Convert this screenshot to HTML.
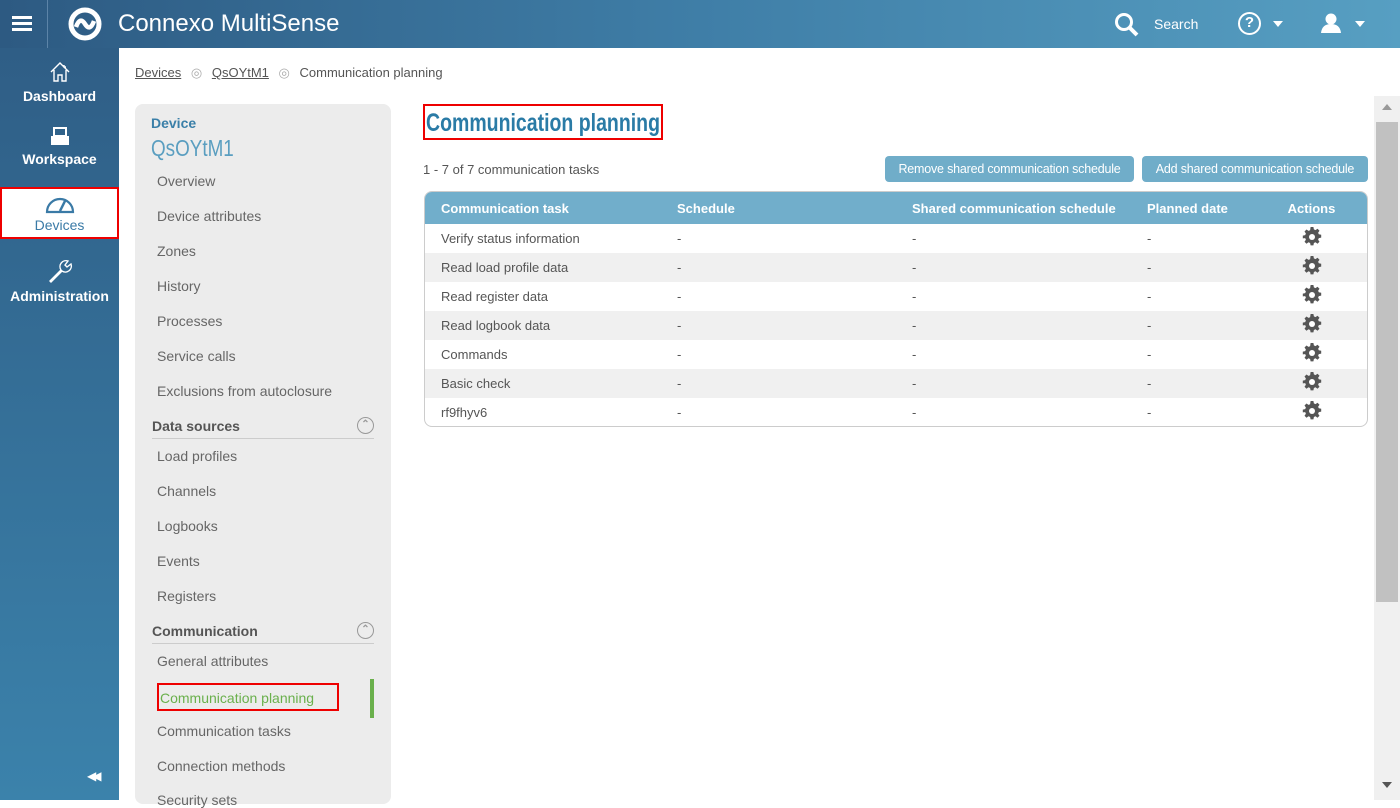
<!DOCTYPE html>
<html><head><meta charset="utf-8"><style>
*{box-sizing:border-box;margin:0;padding:0}
body{width:1400px;height:800px;overflow:hidden;font-family:"Liberation Sans",sans-serif;background:#fff;position:relative;color:#555}
#hdr{position:absolute;left:0;top:0;width:1400px;height:48px;background:linear-gradient(90deg,#2d5a82,#3f7ea7 50%,#579fc2)}
#side{position:absolute;left:0;top:48px;width:119px;height:752px;background:linear-gradient(180deg,#2f5e86,#3b82ab)}
.nav{position:absolute;left:0;width:119px;text-align:center;color:#fff;font-size:14px;font-weight:bold}
.abs{position:absolute}
.sub{position:absolute;left:157px;font-size:14px;color:#666}
.sec{position:absolute;left:152px;width:222px;font-size:14px;font-weight:bold;color:#555;border-bottom:1px solid #ccc;height:21px}
.sec span{position:absolute;right:0;top:-1px;width:17px;height:17px;border:1.5px solid #999;border-radius:50%;font-size:10px;color:#999;text-align:center;line-height:14px}
table{border-collapse:collapse;width:942px;font-size:13px}
th{background:#71aecb;color:#fff;text-align:left;height:32px;font-weight:bold;padding-left:16px}
td{height:29px;padding-left:16px;color:#555}
tr:nth-child(odd) td{background:#f0f0f0}
.btn{position:absolute;top:156px;height:26px;background:#70adc9;color:#fff;font-size:12.5px;border-radius:4px;line-height:26px;text-align:center;letter-spacing:-0.2px}
.gear{padding-left:0;text-align:center}
</style></head><body>
<svg width="0" height="0" style="position:absolute"><defs><g id="g"><path d="M8.6 0h2.8l.5 2.4 1.6.7 2-1.4 2 2-1.4 2 .7 1.6 2.4.5v2.8l-2.4.5-.7 1.6 1.4 2-2 2-2-1.4-1.6.7-.5 2.4H8.6l-.5-2.4-1.6-.7-2 1.4-2-2 1.4-2-.7-1.6L.8 11.4V8.6l2.4-.5.7-1.6-1.4-2 2-2 2 1.4 1.6-.7z" fill="#555"/><circle cx="10" cy="10" r="3" fill="#fff"/></g></defs></svg>
<div id="hdr">
 <div class="abs" style="left:12px;top:16px;width:20px;height:3px;background:#fff;box-shadow:0 6px 0 #fff,0 12px 0 #fff"></div>
 <div class="abs" style="left:47px;top:0;width:1px;height:48px;background:#5c84a8"></div>
 <svg class="abs" style="left:62px;top:6px" width="46" height="36" viewBox="0 0 46 36"><circle cx="23" cy="18" r="14" fill="none" stroke="#fff" stroke-width="5"/><path d="M14 21 Q18 10 23 18 Q28 26 32 15" fill="none" stroke="#fff" stroke-width="4.5"/></svg>
 <div class="abs" style="left:118px;top:10px;color:#fff;font-size:24px">Connexo MultiSense</div>
 <svg class="abs" style="left:1114px;top:12px" width="26" height="26"><circle cx="10" cy="10" r="7.5" fill="none" stroke="#fff" stroke-width="3"/><path d="M15 15 L23 23" stroke="#fff" stroke-width="4"/></svg>
 <div class="abs" style="left:1154px;top:16px;color:#fff;font-size:14px">Search</div>
 <div class="abs" style="left:1238px;top:12px;width:23px;height:23px;border:2.5px solid #fff;border-radius:50%;color:#fff;font-weight:bold;font-size:15px;text-align:center;line-height:18px">?</div>
 <div class="abs" style="left:1273px;top:21px;border:5px solid transparent;border-top:6px solid #fff"></div>
 <svg class="abs" style="left:1320px;top:12px" width="22" height="22"><circle cx="11" cy="7" r="5.5" fill="#fff"/><path d="M1 21 Q2 12 11 12 Q20 12 21 21Z" fill="#fff"/></svg>
 <div class="abs" style="left:1355px;top:21px;border:5px solid transparent;border-top:6px solid #fff"></div>
</div>
<div id="side">
 <div class="nav" style="top:12px"><svg width="24" height="24" viewBox="0 0 24 24"><path d="M3 12 L12 3 L21 12 M6 10 V21 H10 V15 H14 V21 H18 V10 M16 5 V7 H18" fill="none" stroke="#fff" stroke-width="1.4"/></svg><div style="margin-top:1px">Dashboard</div></div>
 <div class="nav" style="top:78px"><svg width="20" height="22" viewBox="0 0 20 22"><rect x="4" y="2" width="12" height="8" fill="none" stroke="#fff" stroke-width="2"/><rect x="1" y="10" width="18" height="9" fill="#fff"/></svg><div>Workspace</div></div>
 <div class="abs" style="left:0;top:139px;width:119px;height:52px;background:#fff;border:2px solid #e00;text-align:center;color:#3a7aa6;font-size:14px;padding-top:5px"><svg width="30" height="20" viewBox="0 0 30 20"><path d="M2 18 A13 13 0 0 1 28 18 Z" fill="none" stroke="#3a7aa6" stroke-width="2.2"/><path d="M15 17 L20 7" stroke="#3a7aa6" stroke-width="2.5"/></svg><div style="margin-top:0px">Devices</div></div>
 <div class="nav" style="top:209px"><svg width="28" height="28" viewBox="0 0 28 28"><path d="M4 24 L15 13 A6 6 0 0 1 22 4 L19 8 L21 10 L25 7 A6 6 0 0 1 16 14 L5 25Z" fill="none" stroke="#fff" stroke-width="1.4"/></svg><div>Administration</div></div>
 <div class="abs" style="left:87px;top:721px;color:#fff;font-size:12px;letter-spacing:-4px">◀◀</div>
</div>
<div class="abs" style="left:135px;top:65px;font-size:13px;color:#555"><u>Devices</u> <span style="color:#aaa;margin:0 6px">◎</span> <u>QsOYtM1</u> <span style="color:#aaa;margin:0 6px">◎</span> Communication planning</div>
<div class="abs" style="left:135px;top:104px;width:256px;height:700px;background:#ececec;border-radius:8px"></div>
<div class="abs" style="left:151px;top:115px;color:#3a7fa8;font-weight:bold;font-size:14px">Device</div>
<div class="abs" style="left:151px;top:135px;color:#5a9ec0;font-size:23px;transform:scaleX(.82);transform-origin:left">QsOYtM1</div>
<div class="sub" style="top:173px">Overview</div>
<div class="sub" style="top:208px">Device attributes</div>
<div class="sub" style="top:243px">Zones</div>
<div class="sub" style="top:278px">History</div>
<div class="sub" style="top:313px">Processes</div>
<div class="sub" style="top:348px">Service calls</div>
<div class="sub" style="top:383px">Exclusions from autoclosure</div>
<div class="sec" style="top:418px">Data sources<span>⌃</span></div>
<div class="sub" style="top:448px">Load profiles</div>
<div class="sub" style="top:483px">Channels</div>
<div class="sub" style="top:518px">Logbooks</div>
<div class="sub" style="top:553px">Events</div>
<div class="sub" style="top:588px">Registers</div>
<div class="sec" style="top:623px">Communication<span>⌃</span></div>
<div class="sub" style="top:653px">General attributes</div>
<div class="abs" style="left:157px;top:683px;width:182px;height:28px;border:2px solid #e00;color:#6ab04c;font-size:14px;padding:5px 0 0 1px">Communication planning</div>
<div class="abs" style="left:370px;top:679px;width:4px;height:39px;background:#6ab04c"></div>
<div class="sub" style="top:723px">Communication tasks</div>
<div class="sub" style="top:758px">Connection methods</div>
<div class="sub" style="top:792px">Security sets</div>
<div class="abs" style="left:423px;top:104px;width:240px;height:36px;border:2px solid #e00;color:#2a7ba6;font-size:25px;font-weight:bold;padding:3px 0 0 1px;white-space:nowrap"><span style="display:inline-block;transform:scaleX(.78);transform-origin:left">Communication planning</span></div>
<div class="abs" style="left:423px;top:162px;font-size:13px;color:#555">1 - 7 of 7 communication tasks</div>
<div class="btn" style="left:885px;width:249px">Remove shared communication schedule</div>
<div class="btn" style="left:1142px;width:226px">Add shared communication schedule</div>
<div class="abs" style="left:424px;top:191px;width:944px;height:236px;border:1px solid #ccc;border-radius:8px;overflow:hidden">
<table>
<tr><th style="width:236px">Communication task</th><th style="width:235px">Schedule</th><th style="width:235px">Shared communication schedule</th><th style="width:125px">Planned date</th><th style="padding-left:0;text-align:center">Actions</th></tr>
<tr><td>Verify status information</td><td>-</td><td>-</td><td>-</td><td class="gear"><svg width="20" height="20"><use href="#g"/></svg></td></tr>
<tr><td>Read load profile data</td><td>-</td><td>-</td><td>-</td><td class="gear"><svg width="20" height="20"><use href="#g"/></svg></td></tr>
<tr><td>Read register data</td><td>-</td><td>-</td><td>-</td><td class="gear"><svg width="20" height="20"><use href="#g"/></svg></td></tr>
<tr><td>Read logbook data</td><td>-</td><td>-</td><td>-</td><td class="gear"><svg width="20" height="20"><use href="#g"/></svg></td></tr>
<tr><td>Commands</td><td>-</td><td>-</td><td>-</td><td class="gear"><svg width="20" height="20"><use href="#g"/></svg></td></tr>
<tr><td>Basic check</td><td>-</td><td>-</td><td>-</td><td class="gear"><svg width="20" height="20"><use href="#g"/></svg></td></tr>
<tr><td>rf9fhyv6</td><td>-</td><td>-</td><td>-</td><td class="gear"><svg width="20" height="20"><use href="#g"/></svg></td></tr>
</table></div>
<div class="abs" style="left:1374px;top:96px;width:26px;height:704px;background:#f0f0f0"></div>
<div class="abs" style="left:1376px;top:122px;width:22px;height:480px;background:#c1c1c1"></div>
<div class="abs" style="left:1382px;top:104px;border:5px solid transparent;border-bottom:6px solid #999;border-top:0"></div>
<div class="abs" style="left:1382px;top:782px;border:5px solid transparent;border-top:6px solid #555;border-bottom:0"></div>
</body></html>
